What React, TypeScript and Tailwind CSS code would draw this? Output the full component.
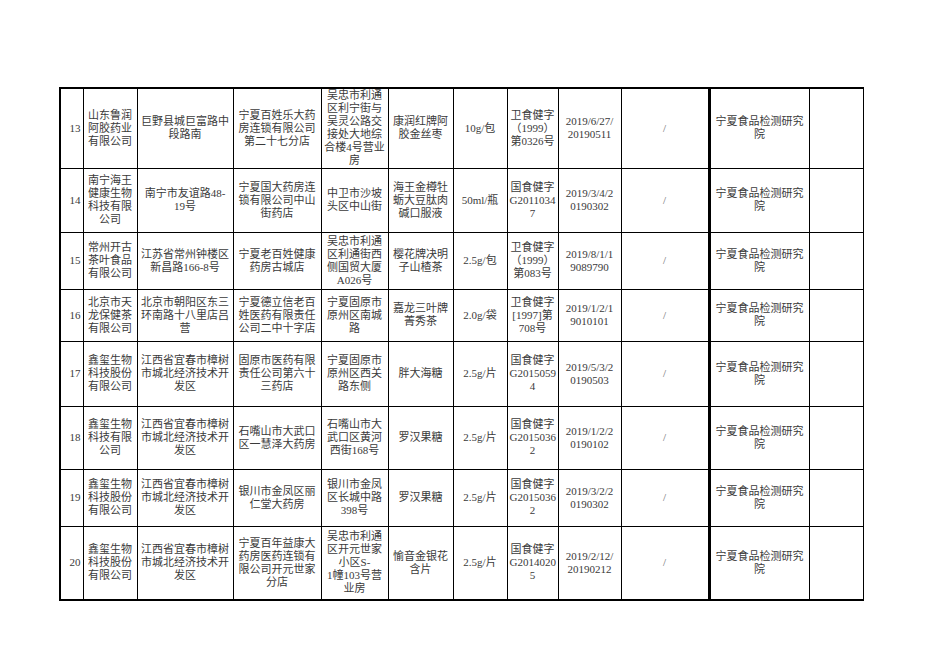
const cols = [23, 54, 96, 88, 67, 65, 54, 51, 63, 88, 100, 54];

type Row = {
  no: string;
  h: string;
  cells: string[][];
};

const rows: Row[] = [
  {
    no: '13',
    h: 'h-[80px]',
    cells: [
      ['山东鲁润', '阿胶药业', '有限公司'],
      ['巨野县城巨富路中', '段路南'],
      ['宁夏百姓乐大药', '房连锁有限公司', '第二十七分店'],
      ['吴忠市利通', '区利宁街与', '吴灵公路交', '接处大地综', '合楼4号营业', '房'],
      ['康润红牌阿', '胶金丝枣'],
      ['10g/包'],
      ['卫食健字', '（1999）', '第0326号'],
      ['2019/6/27/', '20190511'],
    ],
  },
  {
    no: '14',
    h: 'h-[64px]',
    cells: [
      ['南宁海王', '健康生物', '科技有限', '公司'],
      ['南宁市友谊路48-', '19号'],
      ['宁夏国大药房连', '锁有限公司中山', '街药店'],
      ['中卫市沙坡', '头区中山街'],
      ['海王金樽牡', '蛎大豆肽肉', '碱口服液'],
      ['50ml/瓶'],
      ['国食健字', 'G2011034', '7'],
      ['2019/3/4/2', '0190302'],
    ],
  },
  {
    no: '15',
    h: 'h-[57px]',
    cells: [
      ['常州开古', '茶叶食品', '有限公司'],
      ['江苏省常州钟楼区', '新昌路166-8号'],
      ['宁夏老百姓健康', '药房古城店'],
      ['吴忠市利通', '区利通街西', '侧国贸大厦', 'A026号'],
      ['樱花牌决明', '子山楂茶'],
      ['2.5g/包'],
      ['卫食健字', '（1999）', '第083号'],
      ['2019/8/1/1', '9089790'],
    ],
  },
  {
    no: '16',
    h: 'h-[52px]',
    cells: [
      ['北京市天', '龙保健茶', '有限公司'],
      ['北京市朝阳区东三', '环南路十八里店吕', '营'],
      ['宁夏德立信老百', '姓医药有限责任', '公司二中十字店'],
      ['宁夏固原市', '原州区南城', '路'],
      ['嘉龙三叶牌', '菁秀茶'],
      ['2.0g/袋'],
      ['卫食健字', '[1997]第', '708号'],
      ['2019/1/2/1', '9010101'],
    ],
  },
  {
    no: '17',
    h: 'h-[65px]',
    cells: [
      ['鑫玺生物', '科技股份', '有限公司'],
      ['江西省宜春市樟树', '市城北经济技术开', '发区'],
      ['固原市医药有限', '责任公司第六十', '三药店'],
      ['宁夏固原市', '原州区西关', '路东侧'],
      ['胖大海糖'],
      ['2.5g/片'],
      ['国食健字', 'G2015059', '4'],
      ['2019/5/3/2', '0190503'],
    ],
  },
  {
    no: '18',
    h: 'h-[63px]',
    cells: [
      ['鑫玺生物', '科技有限', '公司'],
      ['江西省宜春市樟树', '市城北经济技术开', '发区'],
      ['石嘴山市大武口', '区一慧泽大药房'],
      ['石嘴山市大', '武口区黄河', '西街168号'],
      ['罗汉果糖'],
      ['2.5g/片'],
      ['国食健字', 'G2015036', '2'],
      ['2019/1/2/2', '0190102'],
    ],
  },
  {
    no: '19',
    h: 'h-[57px]',
    cells: [
      ['鑫玺生物', '科技股份', '有限公司'],
      ['江西省宜春市樟树', '市城北经济技术开', '发区'],
      ['银川市金凤区丽', '仁堂大药房'],
      ['银川市金凤', '区长城中路', '398号'],
      ['罗汉果糖'],
      ['2.5g/片'],
      ['国食健字', 'G2015036', '2'],
      ['2019/3/2/2', '0190302'],
    ],
  },
  {
    no: '20',
    h: 'h-[74px]',
    cells: [
      ['鑫玺生物', '科技股份', '有限公司'],
      ['江西省宜春市樟树', '市城北经济技术开', '发区'],
      ['宁夏百年益康大', '药房医药连锁有', '限公司开元世家', '分店'],
      ['吴忠市利通', '区开元世家', '小区S-', '1幢103号营', '业房'],
      ['愉音金银花', '含片'],
      ['2.5g/片'],
      ['国食健字', 'G2014020', '5'],
      ['2019/2/12/', '20190212'],
    ],
  },
];

function Lines({ lines }: { lines: string[] }) {
  return (
    <>
      {lines.map((line, i) => (
        <div key={i} className="whitespace-nowrap">
          {line}
        </div>
      ))}
    </>
  );
}

export default function App() {
  return (
    <div className="min-h-[662px] w-[936px] bg-white pt-[87px] pl-[59px] font-['Liberation_Serif','Noto_Sans_CJK_SC',serif] text-[11px] leading-[13px] text-[#3a3a3a]">
      <table className="w-[802px] table-fixed border-collapse">
        <colgroup>
          {cols.map((w, i) => (
            <col key={i} style={{ width: w }} />
          ))}
        </colgroup>
        <tbody>
          {rows.map((row, ri) => {
            const edge = `${ri === 0 ? 'border-t-2' : ''} ${ri === rows.length - 1 ? 'border-b-2' : ''}`;
            return (
              <tr key={row.no} className={row.h}>
                <td className={`border border-l-2 border-black pr-[2px] text-right align-middle ${edge}`}>
                  {row.no}
                </td>
                {row.cells.map((lines, ci) => (
                  <td
                    key={ci}
                    className={`overflow-visible border border-black px-[2px] text-center align-middle ${edge}`}
                  >
                    <Lines lines={lines} />
                  </td>
                ))}
                <td className={`border border-black text-center align-middle text-[#666] ${edge}`}>/</td>
                <td className={`border border-l-[3px] border-black px-[2px] text-center align-middle ${edge}`}>
                  <Lines lines={['宁夏食品检测研究', '院']} />
                </td>
                <td className={`border border-black ${edge}`} />
              </tr>
            );
          })}
        </tbody>
      </table>
    </div>
  );
}
